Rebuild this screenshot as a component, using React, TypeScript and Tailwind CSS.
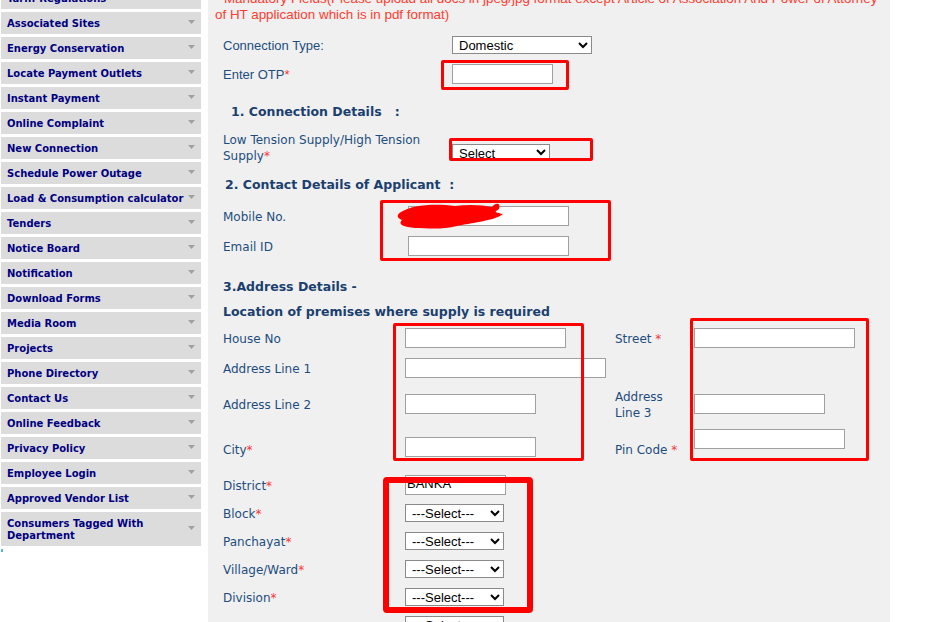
import React from 'react';

const menuItems = [
  'Tariff Regulations',
  'Associated Sites',
  'Energy Conservation',
  'Locate Payment Outlets',
  'Instant Payment',
  'Online Complaint',
  'New Connection',
  'Schedule Power Outage',
  'Load & Consumption calculator',
  'Tenders',
  'Notice Board',
  'Notification',
  'Download Forms',
  'Media Room',
  'Projects',
  'Phone Directory',
  'Contact Us',
  'Online Feedback',
  'Privacy Policy',
  'Employee Login',
  'Approved Vendor List',
];

const Arrow: React.FC = () => (
  <svg width="7" height="4" viewBox="0 0 7 4" className="shrink-0">
    <polygon points="0,0 7,0 3.5,4" fill="#a0a0a0" />
  </svg>
);

const MenuItem: React.FC<{ label: string; tall?: boolean }> = ({ label, tall }) => (
  <div
    className={`flex items-center justify-between bg-[#dcdcdc] pl-[6px] pr-[6px] ${tall ? 'h-[34px]' : 'h-[22px]'}`}
  >
    <span className={`text-[10px] leading-[12px] font-bold text-[#000080] pt-[1px] ${tall ? 'w-[150px]' : 'whitespace-nowrap'}`}>
      {label}
    </span>
    <div className="-mt-[2px]">
      <Arrow />
    </div>
  </div>
);

const Star = () => <span className="text-[#ff3333]">*</span>;

const TextBox: React.FC<{ w: string; children?: React.ReactNode }> = ({ w, children }) => (
  <div className={`h-[20px] ${w} shrink-0 border border-[#a0a0a0] bg-white`}>{children}</div>
);

const NativeSelect: React.FC<{ w: string; h?: string; value: string }> = ({ w, h = 'h-[18px]', value }) => (
  <select
    defaultValue={value}
    className={`${w} ${h} shrink-0 border border-[#8a8a8a] bg-white text-[13px] leading-none text-black pl-[2px] font-['Liberation_Sans',Arial,sans-serif]`}
  >
    <option>{value}</option>
  </select>
);

const Label: React.FC<{ w: string; cls?: string; children: React.ReactNode }> = ({ w, cls = '', children }) => (
  <div className={`${w} shrink-0 pt-[2px] ${cls}`}>{children}</div>
);

const Heading: React.FC<{ children: React.ReactNode; pad?: string; mt: string }> = ({ children, pad = '', mt }) => (
  <div className={`${mt} h-[18px] flex items-center pt-[2px] ${pad} text-[12.5px] font-bold text-[#1b3f6e]`}>{children}</div>
);

const RedBox: React.FC<{ cls: string }> = ({ cls }) => (
  <div className={`absolute border-[#ff0000] pointer-events-none ${cls}`} />
);

export default function App() {
  return (
    <div className="relative h-[622px] w-[933px] overflow-hidden bg-white font-['DejaVu_Sans',Verdana,sans-serif]">
      <div className="flex h-full">
        {/* left menu */}
        <div className="w-[201px] pl-[1px] -mt-[13px] flex flex-col gap-[3px]">
          {menuItems.map((m) => (
            <MenuItem key={m} label={m} />
          ))}
          <MenuItem label="Consumers Tagged With Department" tall />
          <div className="w-[2px] h-[3px] bg-[#5aaee8]" />
        </div>

        {/* form panel */}
        <div className="ml-[7px] w-[682px] h-full bg-[#f0f0f0] text-[12px] text-[#1d4d7e]">
          <div className="-mt-[9px] pl-[7px] pr-[2px] text-[13.4px] leading-[16px] text-[#ff3b2f] font-['Liberation_Sans',Arial,sans-serif]">
            * Mandatory Fields(Please upload all docs in jpeg/jpg format except Article of Association And Power of Attorney of HT application which is in pdf format)
          </div>

          <div className="pl-[15px]">
            <div className="mt-[11px] h-[22px] flex items-center">
              <Label w="w-[229px]" cls="text-[13px] font-['Liberation_Sans',Arial,sans-serif]">Connection Type:</Label>
              <NativeSelect w="w-[140px]" value="Domestic" />
            </div>
            <div className="mt-[7px] h-[22px] flex items-center">
              <Label w="w-[229px]" cls="text-[13px] font-['Liberation_Sans',Arial,sans-serif]">
                Enter OTP<Star />
              </Label>
              <TextBox w="w-[101px]" />
            </div>

            <Heading mt="mt-[17px]" pad="pl-[8px]">
              1. Connection Details&nbsp;&nbsp;&nbsp;:
            </Heading>

            <div className="mt-[10px] h-[32px] flex items-start">
              <Label w="w-[229px]" cls="leading-[16px]">
                Low Tension Supply/High Tension
                <br />
                Supply<Star />
              </Label>
              <div className="mt-[14px]">
                <NativeSelect w="w-[98px]" h="h-[17px]" value="Select" />
              </div>
            </div>

            <Heading mt="mt-[13px]" pad="pl-[2px]">
              2. Contact Details of Applicant&nbsp;&nbsp;:
            </Heading>

            <div className="mt-[12px] h-[22px] flex items-center">
              <Label w="w-[185px]">Mobile No.</Label>
              <TextBox w="w-[161px]" />
            </div>
            <div className="mt-[8px] h-[22px] flex items-center">
              <Label w="w-[185px]">Email ID</Label>
              <TextBox w="w-[161px]" />
            </div>

            <Heading mt="mt-[20px]">3.Address Details -</Heading>
            <Heading mt="mt-[7px]">Location of premises where supply is required</Heading>

            <div className="mt-[7px] h-[22px] flex items-center">
              <Label w="w-[182px]">House No</Label>
              <TextBox w="w-[161px]" />
              <Label w="w-[79px]" cls="ml-[49px]">
                Street <Star />
              </Label>
              <TextBox w="w-[161px]" />
            </div>
            <div className="mt-[8px] h-[22px] flex items-center">
              <Label w="w-[182px]">Address Line 1</Label>
              <TextBox w="w-[201px]" />
            </div>
            <div className="mt-[9px] h-[32px] flex items-center">
              <Label w="w-[182px]">Address Line 2</Label>
              <TextBox w="w-[131px]" />
              <Label w="w-[79px]" cls="ml-[79px] leading-[16px]">
                Address
                <br />
                Line 3
              </Label>
              <TextBox w="w-[131px]" />
            </div>
            <div className="mt-[8px] h-[30px] flex items-start">
              <Label w="w-[182px]" cls="mt-[12px] leading-[16px]">
                City<Star />
              </Label>
              <div className="mt-[9px]">
                <TextBox w="w-[131px]" />
              </div>
              <Label w="w-[79px]" cls="ml-[79px] mt-[12px] leading-[16px]">
                Pin Code <Star />
              </Label>
              <div className="mt-[1px]">
                <TextBox w="w-[151px]" />
              </div>
            </div>

            <div className="mt-[17px] h-[20px] flex items-center">
              <Label w="w-[182px]">
                District<Star />
              </Label>
              <div className="h-[20px] w-[101px] border border-[#a0a0a0] bg-white overflow-hidden">
                <div className="mt-[0px] pl-[1px] text-[13px] leading-[16px] text-black font-['Liberation_Sans',Arial,sans-serif]">
                  BANKA
                </div>
              </div>
            </div>
            {['Block', 'Panchayat', 'Village/Ward', 'Division', ''].map((l) => (
              <div key={l} className="mt-[8px] h-[20px] flex items-center">
                <Label w="w-[182px]">
                  {l}
                  {l && <Star />}
                </Label>
                <NativeSelect w="w-[99px]" value="---Select---" />
              </div>
            ))}
          </div>
        </div>
      </div>

      {/* mobile number scribble */}
      <svg className="absolute left-[395px] top-[200px]" width="112" height="32" viewBox="0 0 112 32">
        <path
          d="M6 12 C16 5, 40 3, 60 6 C74 4, 88 5, 97 7 C101 2, 106 3, 104 9 C100 12, 98 12, 108 14 C101 20, 82 22, 62 26 C46 30, 32 28, 20 28 C10 27, 2 25, 7 20 C2 18, 1 15, 6 12 Z"
          fill="#ff0000"
        />
      </svg>

      {/* annotation boxes */}
      <RedBox cls="left-[441px] top-[60px] w-[128px] h-[30px] border-[3px] rounded-[2px]" />
      <RedBox cls="left-[449px] top-[138px] w-[144px] h-[23px] border-[3px] rounded-[2px]" />
      <RedBox cls="left-[380px] top-[200px] w-[231px] h-[61px] border-[3px] rounded-[2px]" />
      <RedBox cls="left-[393px] top-[323px] w-[191px] h-[138px] border-[3px] rounded-[2px]" />
      <RedBox cls="left-[690px] top-[318px] w-[179px] h-[143px] border-[3px] rounded-[2px]" />
      <RedBox cls="left-[383px] top-[477px] w-[150px] h-[136px] border-[6px] rounded-[4px]" />
    </div>
  );
}
